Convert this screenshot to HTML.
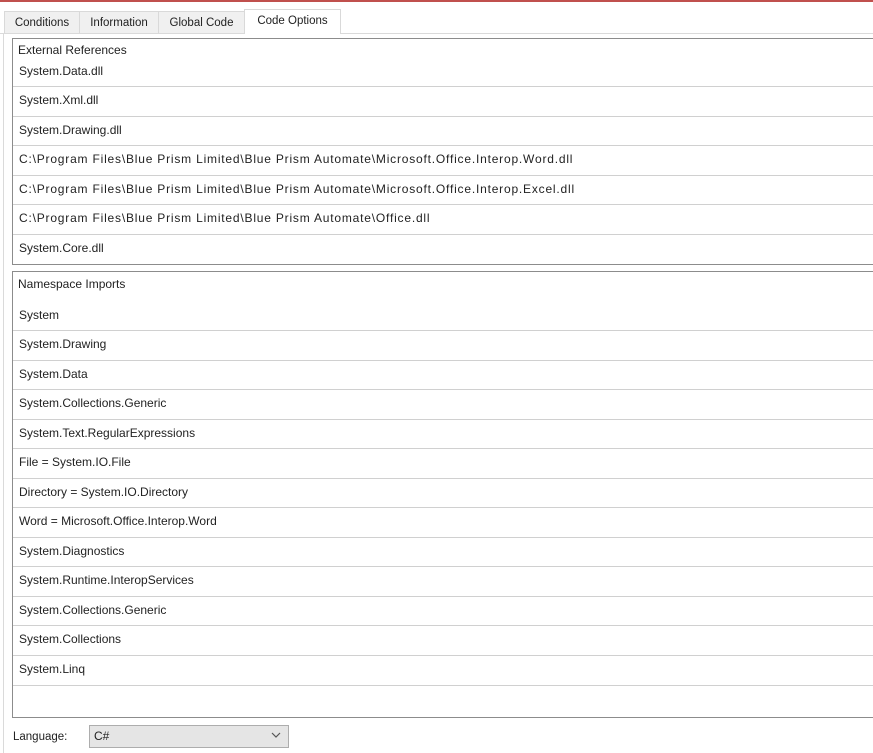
<!DOCTYPE html>
<html><head><style>
body{margin:0;width:873px;height:753px;background:#fff;position:relative;overflow:hidden;font-family:"Liberation Sans",sans-serif;font-size:12px;color:#222}
.a{position:absolute}
.t{position:absolute;white-space:nowrap;line-height:14px}
.p{letter-spacing:0.8px}
.sep{position:absolute;left:13px;width:870px;height:1px;background:#d0d0d0}
.tab{position:absolute;top:11px;height:22px;background:#f0f0f0;border:1px solid #d9d9d9;border-bottom:none;line-height:22px;text-align:center;box-sizing:border-box;font-size:11.5px}
</style></head><body>
<div class="a" style="left:0;top:0;width:873px;height:2px;background:#c0504d"></div>
<div class="a" style="left:0;top:33px;width:873px;height:1px;background:#dadada"></div>
<div class="a" style="left:3px;top:33px;width:1px;height:720px;background:#dadada"></div>
<div class="tab" style="left:4px;width:76px">Conditions</div>
<div class="tab" style="left:79px;width:80px">Information</div>
<div class="tab" style="left:158px;width:87px">Global Code</div>
<div class="tab" style="left:244px;top:9px;height:25px;width:97px;background:#fff;line-height:22px">Code Options</div>

<div class="a" style="left:12px;top:38px;width:880px;height:225px;border:1px solid #8c8c8c"></div>
<div class="t" style="left:18px;top:43px">External References</div>
<div class="t" style="left:19px;top:64px">System.Data.dll</div>
<div class="sep" style="top:86px"></div>
<div class="t" style="left:19px;top:93px">System.Xml.dll</div>
<div class="sep" style="top:116px"></div>
<div class="t" style="left:19px;top:123px">System.Drawing.dll</div>
<div class="sep" style="top:145px"></div>
<div class="t p" style="left:19px;top:152px">C:\Program Files\Blue Prism Limited\Blue Prism Automate\Microsoft.Office.Interop.Word.dll</div>
<div class="sep" style="top:175px"></div>
<div class="t p" style="left:19px;top:182px">C:\Program Files\Blue Prism Limited\Blue Prism Automate\Microsoft.Office.Interop.Excel.dll</div>
<div class="sep" style="top:204px"></div>
<div class="t p" style="left:19px;top:211px">C:\Program Files\Blue Prism Limited\Blue Prism Automate\Office.dll</div>
<div class="sep" style="top:234px"></div>
<div class="t" style="left:19px;top:241px">System.Core.dll</div>

<div class="a" style="left:12px;top:271px;width:880px;height:445px;border:1px solid #8c8c8c"></div>
<div class="t" style="left:18px;top:277px">Namespace Imports</div>
<div class="t" style="left:19px;top:308px">System</div>
<div class="sep" style="top:330px"></div>
<div class="t" style="left:19px;top:337px">System.Drawing</div>
<div class="sep" style="top:360px"></div>
<div class="t" style="left:19px;top:367px">System.Data</div>
<div class="sep" style="top:389px"></div>
<div class="t" style="left:19px;top:396px">System.Collections.Generic</div>
<div class="sep" style="top:419px"></div>
<div class="t" style="left:19px;top:426px">System.Text.RegularExpressions</div>
<div class="sep" style="top:448px"></div>
<div class="t" style="left:19px;top:455px">File = System.IO.File</div>
<div class="sep" style="top:478px"></div>
<div class="t" style="left:19px;top:485px">Directory = System.IO.Directory</div>
<div class="sep" style="top:507px"></div>
<div class="t" style="left:19px;top:514px">Word = Microsoft.Office.Interop.Word</div>
<div class="sep" style="top:537px"></div>
<div class="t" style="left:19px;top:544px">System.Diagnostics</div>
<div class="sep" style="top:566px"></div>
<div class="t" style="left:19px;top:573px">System.Runtime.InteropServices</div>
<div class="sep" style="top:596px"></div>
<div class="t" style="left:19px;top:603px">System.Collections.Generic</div>
<div class="sep" style="top:625px"></div>
<div class="t" style="left:19px;top:632px">System.Collections</div>
<div class="sep" style="top:655px"></div>
<div class="t" style="left:19px;top:662px">System.Linq</div>
<div class="sep" style="top:685px"></div>

<div class="t" style="left:13px;top:730px;font-size:11.5px">Language:</div>
<div class="a" style="left:89px;top:725px;width:198px;height:21px;background:#e5e5e5;border:1px solid #adadad"></div>
<div class="t" style="left:94px;top:729px">C#</div>
<svg class="a" style="left:271px;top:732px" width="10" height="7"><path d="M1 1 L5 5 L9 1" fill="none" stroke="#555" stroke-width="1.2"/></svg>
</body></html>
